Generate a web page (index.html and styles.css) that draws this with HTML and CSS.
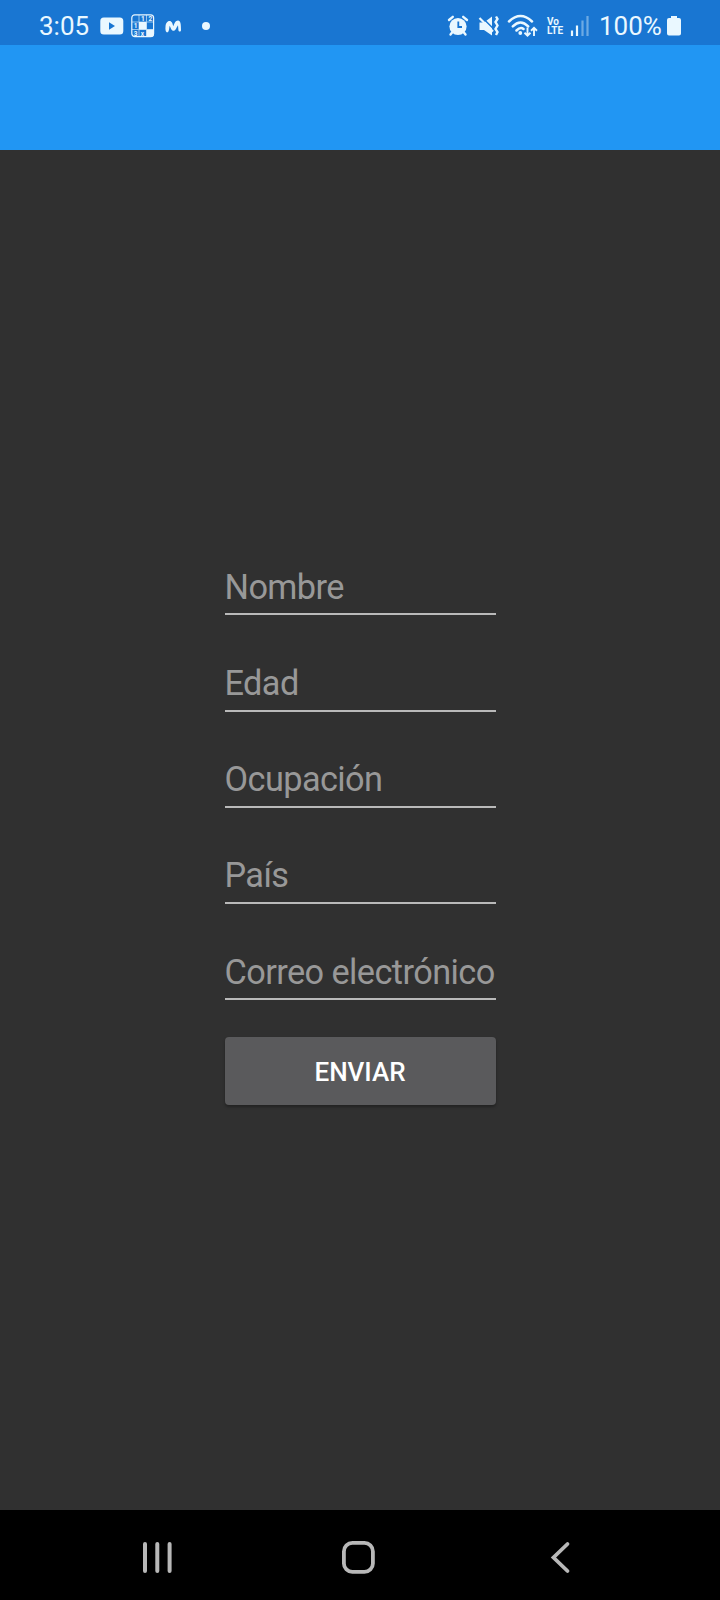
FILE: index.html
```html
<!DOCTYPE html>
<html lang="es">
<head>
<meta charset="utf-8">
<title>Formulario</title>
<link rel="stylesheet" href="styles.css">
</head>
<body>
<div class="screen">
  <header class="status">
    <div class="status-left">
      <span class="clock">3:05</span>
      <svg class="icon-video" width="24" height="18" viewBox="0 0 24 18"><rect x="0.3" y="0.5" width="23" height="17" rx="3.5" fill="currentColor"/><path d="M9 5.2v7.6l6-3.8z" fill="#1976d2"/></svg>
      <svg class="icon-puzzle" width="24" height="24" viewBox="0 0 24 24">
        <rect x="0.8" y="0.8" width="21.8" height="21.8" rx="3" fill="none" stroke="currentColor" stroke-width="1.2"/>
        <path d="M1 8h22M1 15.5h22M8 1v22M15.5 1v22" stroke="currentColor" stroke-width="1" opacity=".6"/>
        <path d="M8 8h7.5v7.5H8zM15.5 15.5H23V20a3 3 0 0 1-3 3h-4.5z" fill="currentColor"/>
        <g class="digits" fill="currentColor"><text x="10" y="7">1</text><text x="17.5" y="7">2</text><text x="2.8" y="14.2">1</text><text x="2.8" y="21.5">3</text><text x="9.8" y="21.5">x</text></g>
      </svg>
      <svg class="icon-m" width="18" height="15" viewBox="0 0 18 15"><path d="M1.500 8C1.500 4.500 3.300 2 5.500 2C7.800 2 8.500 4.500 9.300 7.200C10.300 4.500 11.500 1.500 14 1.500C16.600 1.500 17 5 17 11C17 13 14.600 13 14.400 11L14 6.200C12.500 8.500 11.500 11.800 9.500 11.800C7.500 11.800 6.700 9 5.800 6.700C5 8.500 5.300 13.300 3.300 13.300C1.500 13.300 1.300 10 1.500 8Z" fill="currentColor"/></svg>
      <span class="dot"></span>
    </div>
    <div class="status-right">
      <svg class="icon-alarm" width="22" height="22" viewBox="0 0 22 22"><circle cx="11" cy="11.5" r="8.6" fill="currentColor"/><path d="M2 5l3.800-3.200M20 5l-3.800-3.200M5.500 17l-2 2.500M16.500 17l2 2.500" stroke="currentColor" stroke-width="2.400" stroke-linecap="round"/><path d="M11.300 6.500v5.500h3.700" fill="none" stroke="#1976d2" stroke-width="1.800"/></svg>
      <svg class="icon-mute" width="22" height="22" viewBox="0 0 22 22"><path d="M1.500 7.500h4.500L14 1.500v19L6 15H1.500z" fill="currentColor"/><path d="M3.500 1.800l13 13" stroke="#1976d2" stroke-width="1.500"/><path d="M1.500 3L15 16.500" stroke="currentColor" stroke-width="2.200"/><path d="M18 1.500l1.500 2.500-2 3 2 3.500-2 3.500 2 3-1.500 3" fill="none" stroke="currentColor" stroke-width="2.400"/></svg>
      <svg class="icon-wifi" width="32" height="24" viewBox="0 0 32 24"><path d="M2 7.500Q13.500-3.500 25 7.500M5.800 12.300Q13.500 4.500 21.200 12.300M9.500 16.500Q13.500 12.500 16.500 15" fill="none" stroke="currentColor" stroke-width="2.500" stroke-linecap="round"/><circle cx="13.300" cy="19" r="1.900" fill="currentColor"/><path d="M20.500 13.500v8M17.500 18.800l3 2.800 3-2.800M27 22v-8M24 16.700l3-2.800 3 2.800" fill="none" stroke="currentColor" stroke-width="1.900"/></svg>
      <span class="volte"><span>Vo</span><span>LTE</span></span>
      <svg class="icon-signal" width="20" height="22" viewBox="0 0 20 22"><path d="M2 15.500V21M7 10.500V21" stroke="currentColor" stroke-width="2.200"/><path d="M12.500 5.500V21M17.500 1V21" stroke="currentColor" stroke-width="2.200" opacity=".4"/></svg>
      <span class="level">100%</span>
      <svg class="icon-battery" width="14" height="22" viewBox="0 0 14 22"><path d="M4 1h6v2h2q2 0 2 2v13.500q0 2-2 2H2q-2 0-2-2V5q0-2 2-2h2z" fill="currentColor"/></svg>
    </div>
  </header>
  <div class="appbar"></div>
  <main class="content">
    <form class="form">
      <input class="field" placeholder="Nombre" aria-label="Nombre">
      <input class="field" placeholder="Edad" aria-label="Edad">
      <input class="field" placeholder="Ocupación" aria-label="Ocupación">
      <input class="field" placeholder="País" aria-label="País">
      <input class="field" placeholder="Correo electrónico" aria-label="Correo electrónico">
      <button class="submit" type="button">ENVIAR</button>
    </form>
  </main>
  <nav class="navbar">
    <svg width="34" height="36" viewBox="0 0 34 36"><path d="M5 4v27M17.300 4v27M29.600 4v27" stroke="currentColor" stroke-width="4" stroke-linecap="round"/></svg>
    <svg class="nav-home" width="36" height="36" viewBox="0 0 36 36"><rect x="3.900" y="2.900" width="29" height="29" rx="8.500" fill="none" stroke="currentColor" stroke-width="3.800"/></svg>
    <svg class="nav-back" width="24" height="36" viewBox="0 0 24 36"><path d="M18.500 4L4.500 17.500L18.500 31" fill="none" stroke="currentColor" stroke-width="3.800" stroke-linecap="round" stroke-linejoin="miter"/></svg>
  </nav>
</div>
</body>
</html>
```
FILE: styles.css
```css
* { box-sizing: border-box; }
body { margin: 0; background: #303030; font-family: Roboto, sans-serif; }
svg { display: block; flex: none; }
.screen { width: 720px; height: 1600px; display: flex; flex-direction: column; }
.status { height: 45px; flex: none; background: #1976d2; color: #eaf8ff; display: flex; justify-content: space-between; padding: 7px 39px 0 39px; }
.status-left, .status-right { display: flex; align-items: center; height: 38px; }
.clock, .level { font-size: 26px; line-height: 38px; }
.clock { width: 61px; }
.icon-puzzle { margin-left: 7px; }
.digits { font-size: 6.5px; font-weight: 700; }
.icon-m { margin-left: 9px; }
.dot { width: 8px; height: 8px; border-radius: 50%; background: currentColor; margin-left: 20px; }
.icon-mute { margin-left: 9px; }
.icon-wifi { margin-left: 7px; }
.volte { display: flex; flex-direction: column; font-size: 10px; line-height: 9px; font-weight: 700; margin-left: 8px; width: 17px; }
.icon-signal { margin-left: 6px; }
.level { margin-left: 9px; width: 63px; }
.icon-battery { margin-left: 5px; }
.appbar { height: 105px; flex: none; background: #2196f3; }
.content { flex: 1; display: flex; flex-direction: column; align-items: center; padding-top: 409.2px; }
.form { width: 271px; display: flex; flex-direction: column; }
.field { width: 100%; height: 56.2px; margin: 0 0 40px; padding: 1px 0 0; border: 0; border-bottom: 2px solid #b9b9b9; border-radius: 0; background: transparent; color: #fff; font: 34.3px Roboto, sans-serif; letter-spacing: -0.58px; outline: 0; }
.field::placeholder { color: #989898; opacity: 1; }
.submit { height: 68px; margin: -3px 0 0; padding: 2px 0 0; border: 0; border-radius: 4px; background: #5a5a5c; color: #fff; font: 500 26px Roboto, sans-serif; box-shadow: 0 2px 3px rgba(0, 0, 0, .3); }
.navbar { height: 90px; flex: none; background: #000; color: #b8b8b8; display: flex; align-items: flex-start; padding: 30px 0 0 140px; }
.nav-home { margin-left: 166px; }
.nav-back { margin-left: 173px; }
```
